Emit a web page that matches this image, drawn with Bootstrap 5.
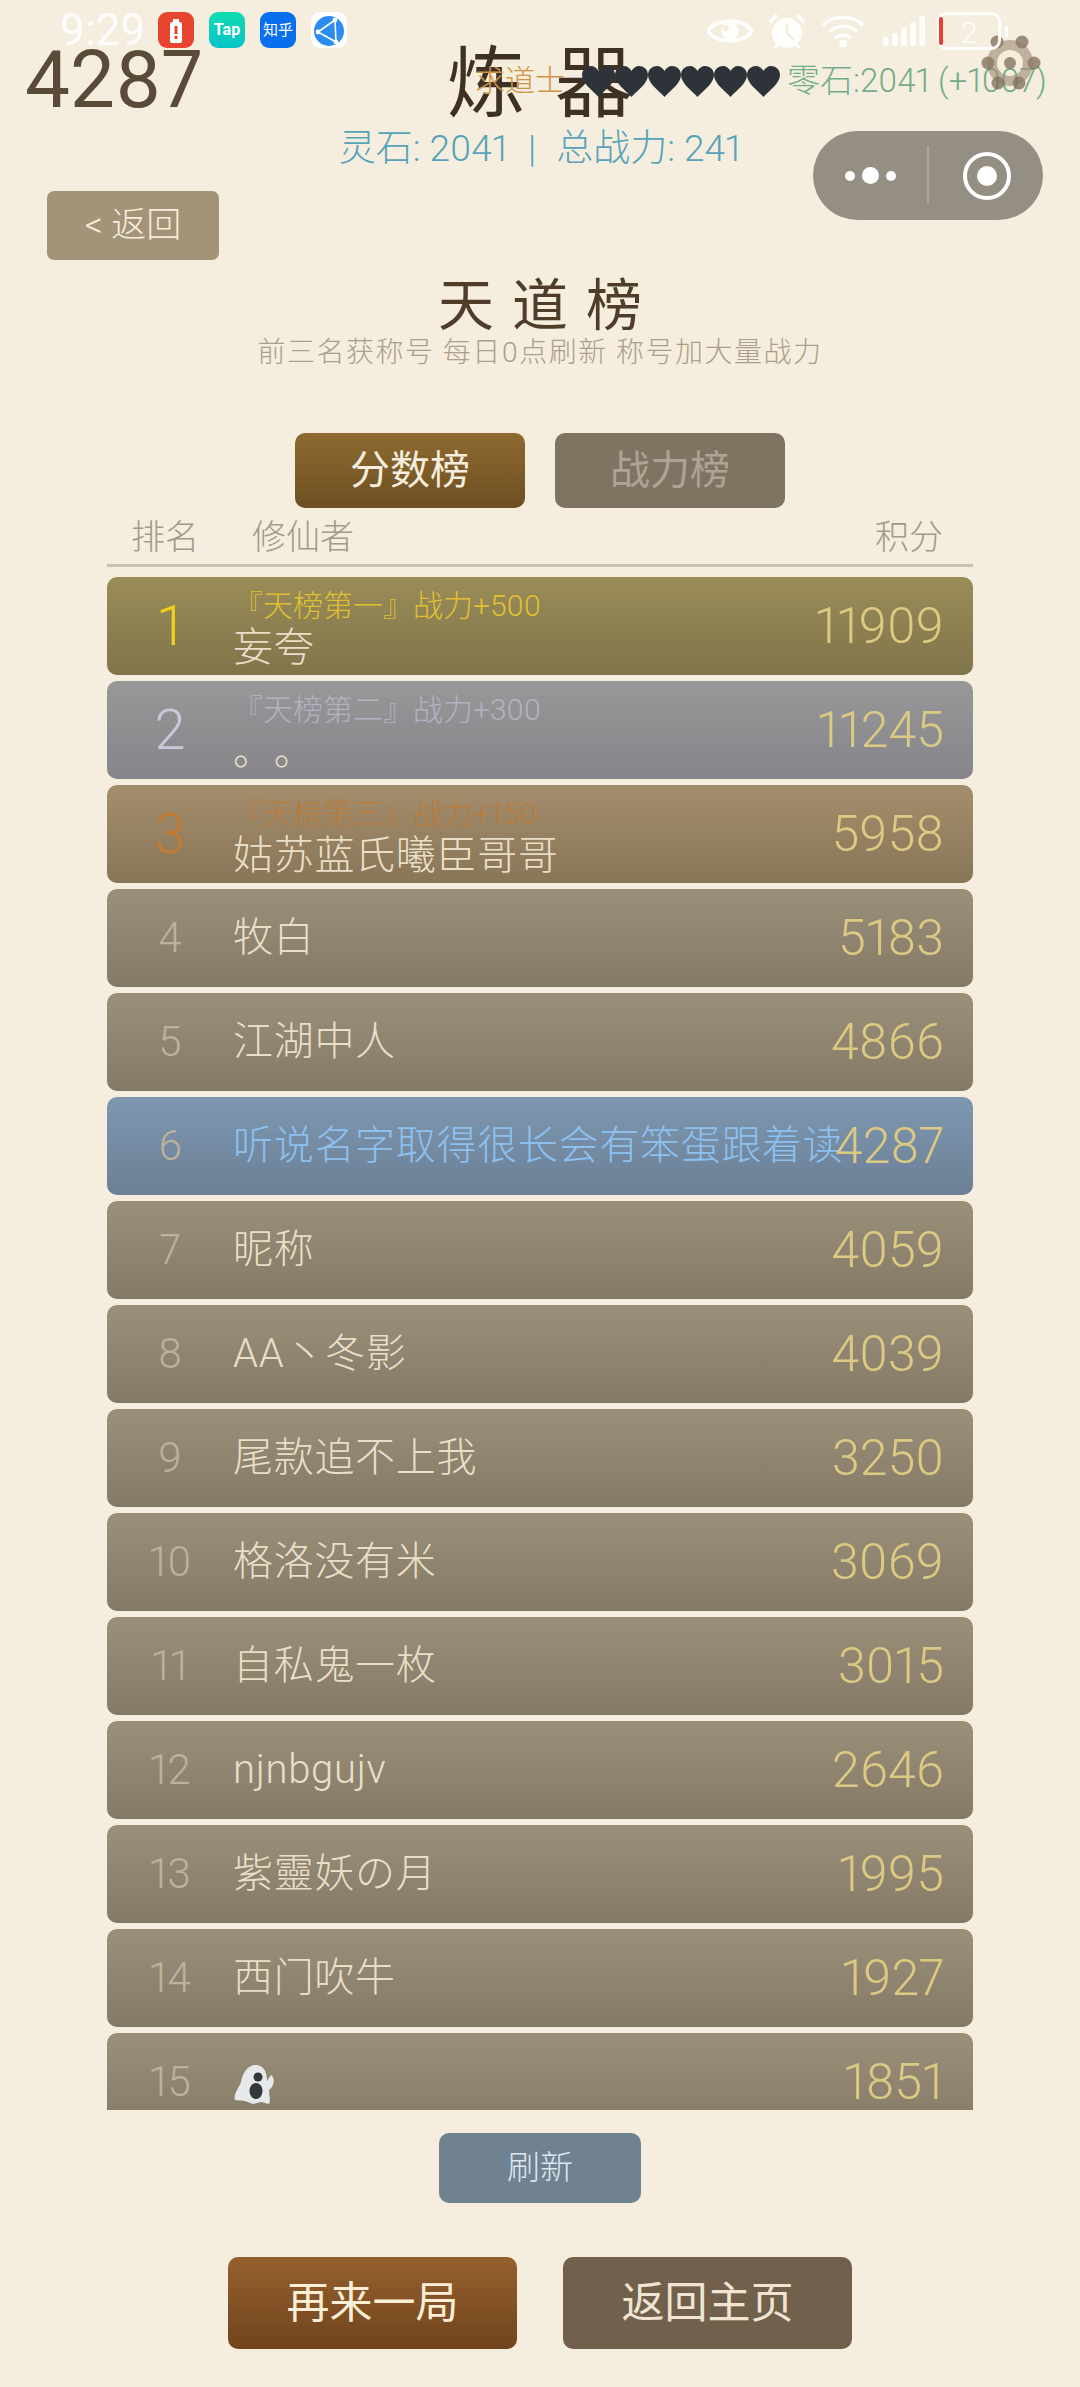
<!doctype html>
<html lang="zh"><head><meta charset="utf-8"><title>天道榜</title>
<link href="https://cdn.jsdelivr.net/npm/bootstrap@5.3.0/dist/css/bootstrap.min.css" rel="stylesheet">
<style>
html,body{height:2387px;overflow:hidden}
body{background:#f5eddd;font-family:Roboto,"Noto Sans CJK SC",sans-serif;color:#5a4a38;position:relative;font-weight:300;font-variant-numeric:proportional-nums}
.stage{width:1080px;height:2387px;padding-top:38px}
.overlay{position:absolute;left:0;top:0}
.clock{left:60px;top:5px;font-size:44px;line-height:50px;color:#fff;font-weight:400;opacity:.92}
.sbicons{left:158px;top:12px;gap:15px}
.appi{width:36px;height:36px;border-radius:9px;color:#fff;font-size:16px;font-weight:700;line-height:36px;text-align:center;overflow:hidden}
.sbright{left:707px;top:12px;gap:14px;opacity:.95}
.score{left:25px;top:30px;font-size:80px;line-height:100px;color:#5a4a38;font-weight:400}
.hud{left:475px;top:54px;font-size:33px;line-height:54px;white-space:nowrap}
.hudtitle{color:#cd9545;font-size:30px;width:107px}
.hearts{gap:0;margin-right:7px}
.stones{color:#72ad8a;font-size:33px}
.gear{left:980px;top:34px;opacity:.85}
.capsule{left:813px;top:131px;width:230px;height:89px;border-radius:45px;background:#958e82}
.capsule i{display:block;background:#fff;border-radius:50%}
.capsep{position:absolute;left:114px;top:15px;width:2px;height:57px;background:#aaa499}
.bigtitle{font-size:78px;line-height:94px;letter-spacing:30px;text-indent:30px;color:#3e3124;text-align:center;font-weight:400;height:94px}
.stats{font-size:37px;line-height:50px;color:#57a3b9;text-align:center;height:51px;font-weight:300;margin-top:-8px}
.stats span{margin:0 20px}
.backbtn{margin:16px 0 0 47px;width:172px;height:69px;background:#a39478;border:0;border-radius:7px;color:#f5eddd;font-size:35px;line-height:69px;padding:0;font-weight:300}
.boardtitle{margin-top:12px;font-size:56px;line-height:68px;letter-spacing:18px;text-indent:18px;color:#4f3d2a;text-align:center;font-weight:400}
.boardsub{font-size:28px;line-height:36px;letter-spacing:1.5px;color:#ab9f8b;text-align:center;margin-top:-5px}
.tabs{margin-top:62px;gap:30px}
.tabbtn{width:230px;height:75px;border:0;border-radius:10px;padding:0;font-size:40px;font-weight:400;line-height:75px}
.tabon{background:linear-gradient(#8e6a30,#6d4f22);color:#f5eddd}
.taboff{background:#7f7362;color:#aca495}
.lhead{margin:6px 107px 0;height:53px;border-bottom:3px solid #cbc3b1;color:#a39a8a;font-size:34px;line-height:46px}
.lhead .c1{width:145px;padding-left:24px}
.lwrap{margin:0 107px}
.lclip{margin:10px 0 0;height:1533px;overflow:hidden;display:flex;flex-direction:column;gap:6px}
.lrow{flex:0 0 98px;border-radius:10px;background:linear-gradient(#9a8f79,#857a66);padding:0 29px 0 0}
.rk{width:126px;text-align:center;font-size:42px;color:#bdb19d;line-height:98px;flex:none}
.nm{font-size:40px;letter-spacing:.7px;color:#e9dfc8;line-height:50px;text-spacing-trim:space-all;white-space:nowrap}
.tl{font-size:30px;line-height:34px;margin-top:12px;white-space:nowrap;text-spacing-trim:space-all}
.pt{font-size:50px;color:#dcc982;line-height:98px;font-weight:300;margin-left:auto}
.r1{background:linear-gradient(#9a8d58,#80744b)}.r1 .rk{color:#f1cf1f;font-size:56px}.r1 .tl{color:#e0c030}
.r2{background:linear-gradient(#989898,#85858b)}.r2 .rk{color:#c8c8dc;font-size:56px}.r2 .tl{color:#b2b2c2}
.r3{background:linear-gradient(#a48d6c,#887658)}.r3 .rk{color:#c47a30;font-size:56px}.r3 .tl{color:#b87c3c}
.me{background:linear-gradient(#7d98b0,#6c7f96)}.me .nm{color:#8cc0ef;width:590px}
.refresh{display:block;margin:23px auto 0;width:202px;height:70px;background:#70818f;border:0;border-radius:10px;color:#dbe8f0;font-size:33px;padding:0;font-weight:300}
.bottoms{margin-top:54px;gap:46px}
.botbtn{width:289px;height:92px;border:0;border-radius:10px;padding:0;font-size:43px;font-weight:400;color:#fbeed6}
.again{background:linear-gradient(#95602e,#71441d)}
.home{background:#71604c;color:#efe5d2}
</style></head><body>
<div class="stage">
<div class="bigtitle">炼器</div>
<div class="stats">灵石: 2041<span>|</span>总战力: 241</div>
<button class="btn backbtn">&lt; 返回</button>
<div class="boardtitle">天道榜</div>
<div class="boardsub">前三名获称号 每日0点刷新 称号加大量战力</div>
<div class="tabs d-flex justify-content-center">
<button class="btn tabbtn tabon">分数榜</button><button class="btn tabbtn taboff">战力榜</button>
</div>
<div class="lhead d-flex"><div class="c1">排名</div><div class="flex-grow-1">修仙者</div><div style="padding-right:30px">积分</div></div>
<div class="lwrap"><div class="lclip" id="l"></div></div>
<button class="btn refresh">刷新</button>
<div class="bottoms d-flex justify-content-center"><button class="btn botbtn again">再来一局</button><button class="btn botbtn home">返回主页</button></div>
</div>

<div class="overlay score">4287</div>
<div class="overlay hud d-flex align-items-center"><span class="hudtitle">求道士</span><span class="hearts d-flex" id="h"></span><span class="stones">零石:2041 (+1007)</span></div>
<div class="overlay gear"><svg width="62" height="58" viewBox="0 0 62 58"><circle cx="30" cy="29" r="18" fill="none" stroke="#a08f78" stroke-opacity=".75" stroke-width="10"/><g fill="#7a6852" fill-opacity=".85"><circle cx="17" cy="8" r="6.5"/><circle cx="42" cy="8" r="6.5"/><circle cx="8" cy="29" r="6.5"/><circle cx="54" cy="29" r="6.5"/><circle cx="18" cy="49" r="6.5"/><circle cx="39" cy="49" r="6.5"/><circle cx="30" cy="29" r="6"/></g></svg></div>

<div class="overlay clock">9:29</div>
<div class="overlay sbicons d-flex">
<div class="appi" style="background:#e8452f"><svg width="36" height="36" viewBox="0 0 36 36"><rect x="12" y="9" width="12" height="21" rx="2" fill="#fff"/><rect x="15" y="6" width="6" height="3" fill="#fff"/><rect x="16.5" y="13" width="3" height="8" fill="#e8452f"/><rect x="16.5" y="23" width="3" height="3" fill="#e8452f"/></svg></div>
<div class="appi" style="background:linear-gradient(#10dcb0,#05c4c8)">Tap</div>
<div class="appi" style="background:#0a6fef;font-size:15px;font-weight:400">知乎</div>
<div class="appi" style="background:#fff"><svg width="36" height="36" viewBox="0 0 36 36"><circle cx="18" cy="18" r="15" fill="#2d8cf0"/><path d="M7 19 24 7M7 19 25 29M24 7 25 29" stroke="#fff" stroke-width="1.6" fill="none"/><circle cx="7" cy="19" r="2.4" fill="#fff"/><circle cx="24" cy="7" r="2.4" fill="#fff"/><circle cx="25" cy="29" r="2.4" fill="#fff"/></svg></div>
</div>
<div class="overlay sbright d-flex align-items-center">
<svg width="46" height="36" viewBox="0 0 46 36"><path d="M1 18C9 5 37 5 45 18 37 31 9 31 1 18Z" fill="none" stroke="#fff" stroke-width="4"/><circle cx="23" cy="18" r="9" fill="#fff"/><circle cx="19" cy="15" r="3" fill="#f5eddd"/></svg>
<svg width="40" height="36" viewBox="0 0 40 36"><circle cx="20" cy="20" r="15" fill="#fff"/><path d="M3 9 10 2M37 9 30 2M8 35 11 31M32 35 29 31" stroke="#fff" stroke-width="3.5"/><path d="M20 11V20L27 27" stroke="#f5eddd" stroke-width="2.5" fill="none"/></svg>
<svg width="44" height="36" viewBox="0 0 46 36"><path d="M2 12C12 1 34 1 44 12M9 19C16 11 30 11 37 19M15 26C19 21 27 21 31 26" fill="none" stroke="#fff" stroke-width="3.6"/><circle cx="23" cy="31" r="4" fill="#fff"/></svg>
<svg width="42" height="36" viewBox="0 0 46 36" style="margin-left:4px;margin-right:2px"><g fill="#fff"><rect x="0" y="24" width="6" height="11" rx="3"/><rect x="10" y="20" width="6" height="15" rx="3"/><rect x="20" y="14" width="6" height="21" rx="3"/><rect x="30" y="8" width="6" height="27" rx="3"/><rect x="40" y="1" width="6" height="34" rx="3"/></g></svg>
<svg width="72" height="38" viewBox="0 0 72 38" style="margin-left:-4px"><rect x="1.5" y="1.5" width="61" height="35" rx="8" fill="none" stroke="#fff" stroke-width="3"/><rect x="2" y="5" width="4" height="28" rx="2" fill="#e8352a"/><rect x="68" y="14" width="3" height="11" rx="1.5" fill="#fff"/><text x="32" y="31" font-family="Roboto" font-size="30" fill="#fff" text-anchor="middle">2</text></svg>
</div>
<div class="overlay capsule">
<div class="d-flex align-items-center" style="position:absolute;left:32px;top:0;height:89px;gap:7px"><i style="width:10px;height:10px"></i><i style="width:17px;height:17px"></i><i style="width:10px;height:10px"></i></div>
<div class="capsep"></div>
<svg style="position:absolute;left:150px;top:21px" width="48" height="48" viewBox="0 0 48 48"><circle cx="24" cy="24" r="22" fill="none" stroke="#fff" stroke-width="4"/><circle cx="24" cy="24" r="10" fill="#fff"/></svg>
</div>
<script>
var rows=[["1","妄夸","11909","r1","『天榜第一』战力+500"],["2","。。","11245","r2","『天榜第二』战力+300"],["3","姑苏蓝氏曦臣哥哥","5958","r3","『天榜第三』战力+150"],["4","牧白","5183"],["5","江湖中人","4866"],["6","听说名字取得很长会有笨蛋跟着读","4287","me"],["7","昵称","4059"],["8","AA丶冬影","4039"],["9","尾款追不上我","3250"],["10","格洛没有米","3069"],["11","自私鬼一枚","3015"],["12","njnbgujv","2646"],["13","紫靈妖の月","1995"],["14","西门吹牛","1927"],["15","","1851"]];
var ghost='<svg width="44" height="40" viewBox="0 0 44 40"><path d="M2 36C0 30 6 24 8 18 10 7 16 0 24 1 32 2 34 10 34 17L38 11C42 13 42 22 36 26 36 31 38 36 36 40L28 38 20 40 12 37Z" fill="#e6e8ea"/><circle cx="25" cy="13" r="4.5" fill="#33363a"/><ellipse cx="23" cy="27" rx="6.5" ry="8" fill="#33363a"/></svg>';
document.getElementById('l').innerHTML=rows.map(function(r){
var t=r[4]?'<div class="tl">'+r[4]+'</div>':'';
var n=r[0]=="15"?ghost:r[1];
return '<div class="lrow d-flex '+(r[3]||'')+'"><div class="rk">'+r[0]+'</div><div class="'+(t?'align-self-start':'align-self-center')+'">'+t+'<div class="nm">'+n+'</div></div><div class="pt">'+r[2]+'</div></div>';
}).join('');
var hs='';for(var i=0;i<6;i++)hs+='<svg width="33" height="31" viewBox="0 0 33 31"><path d="M16.5 31C10 24 0 17 0 9 0 3 5 0 9 0 12 0 15 2 16.5 5 18 2 21 0 24 0 28 0 33 3 33 9 33 17 23 24 16.5 31Z" fill="#2e333a"/></svg>';
document.getElementById('h').innerHTML=hs;
</script>
</body></html>
